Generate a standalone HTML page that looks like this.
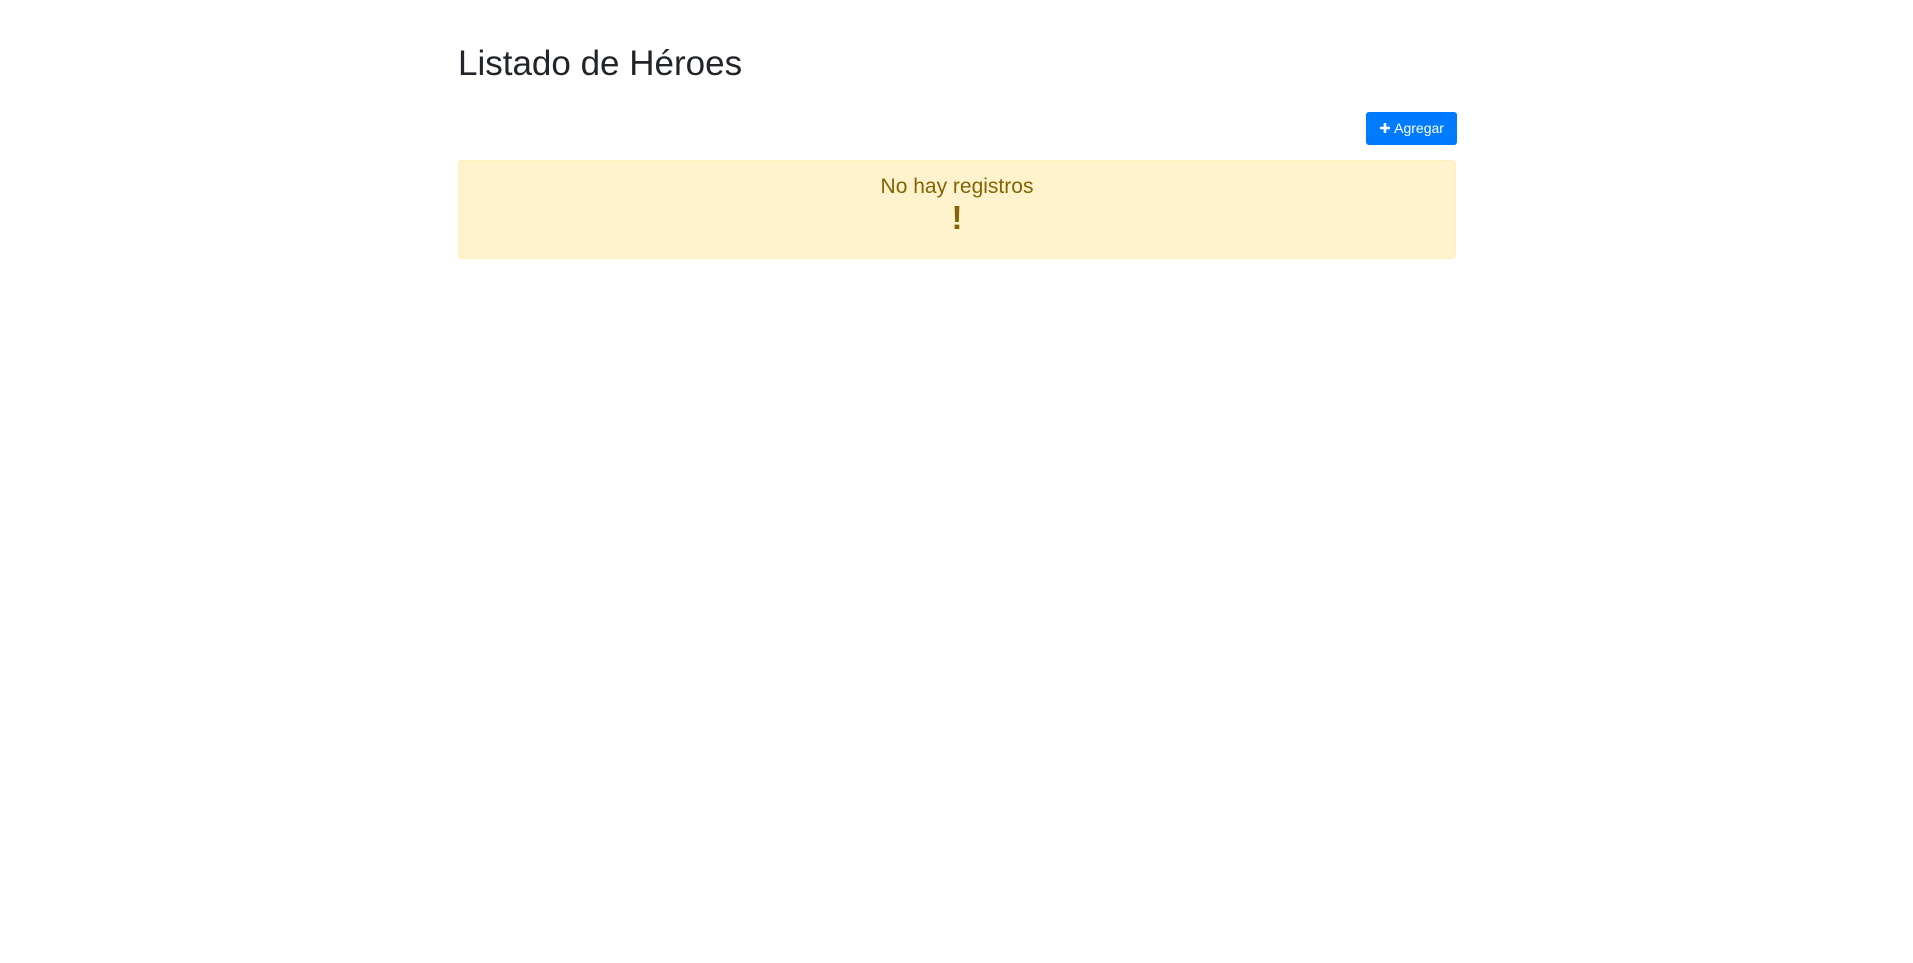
<!DOCTYPE html>
<html><head><meta charset="utf-8"><style>
body{margin:0;background:#fff;font-family:"Liberation Sans",sans-serif;}
h1{position:absolute;left:458px;top:42px;margin:0;font-size:35px;font-weight:500;color:#212529;line-height:44px;}
.btn{position:absolute;left:1366px;top:112px;width:91px;height:33px;background:#007bff;border-radius:3px;color:#fff;font-size:14px;line-height:33px;text-align:center;box-sizing:border-box;}
.alert{position:absolute;left:458px;top:160px;width:998px;height:99px;background:#fff3cd;border:1px solid #ffeeba;border-radius:4px;box-sizing:border-box;text-align:center;color:#856404;}
.t{position:absolute;left:0;right:0;top:12px;font-size:21px;line-height:28px;}
.e{position:absolute;left:0;right:0;top:39px;font-size:33px;font-weight:bold;line-height:36px;}
</style></head><body>
<h1>Listado de Héroes</h1>
<div class="btn"><svg width="12" height="12" viewBox="0 0 12 12" style="vertical-align:-1px"><path d="M6 1v10M1 6h10" stroke="#fff" stroke-width="2.6"/></svg> Agregar</div>
<div class="alert"><div class="t">No hay registros</div><div class="e">!</div></div>
</body></html>
